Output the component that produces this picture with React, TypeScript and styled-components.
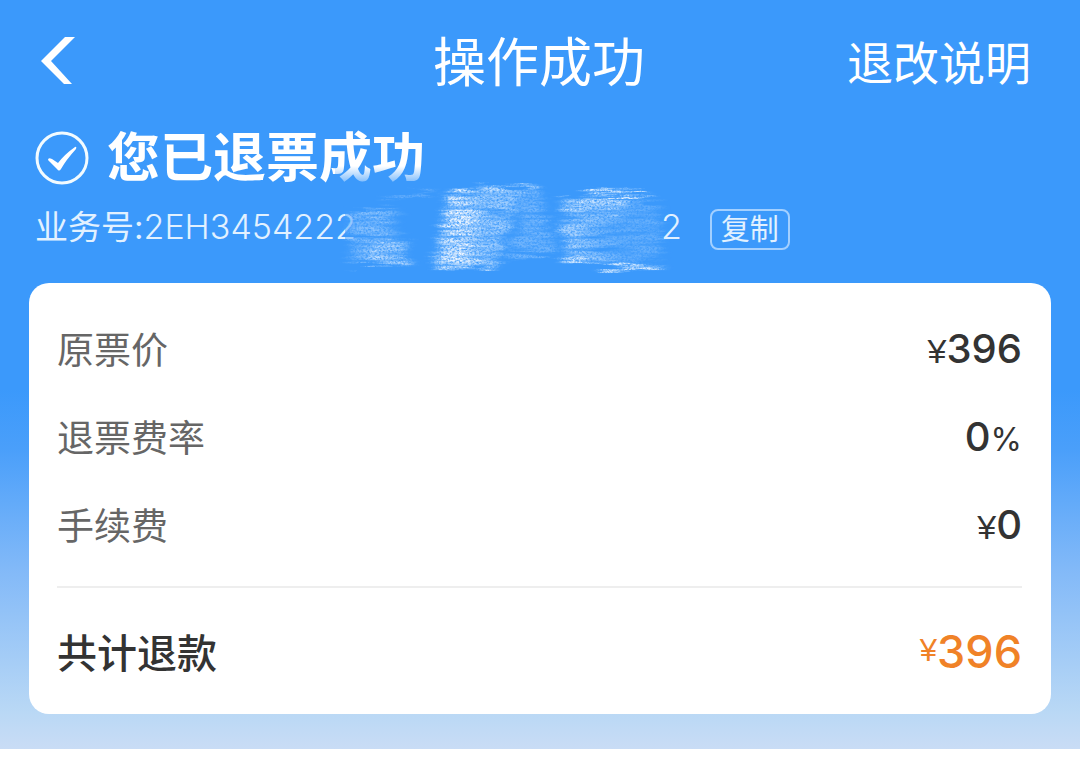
import React from "react";
import styled, { createGlobalStyle } from "styled-components";

const GlobalStyle = createGlobalStyle`
  *, *::before, *::after { box-sizing: border-box; }
  body {
    margin: 0;
    background: #ffffff;
    font-family: Inter, "Noto Sans CJK SC", sans-serif;
    color: #333333;
  }
`;

const Page = styled.main`
  padding: 0 29px 35px;
  background: linear-gradient(
    180deg,
    #3b99fb 0,
    #3b99fb 52%,
    #4a9ffa 60%,
    #82b9f8 76%,
    #b9d8f5 95%,
    #c9dcf5 100%
  );
`;

const NavBar = styled.header`
  display: grid;
  grid-template-columns: 1fr auto 1fr;
  align-items: center;
  height: 124px;
  padding: 2px 14px 0 12px;
  color: #ffffff;
`;

const BackButton = styled.button`
  justify-self: start;
  display: flex;
  padding: 0;
  border: 0;
  background: none;
  color: inherit;
  cursor: pointer;
`;

const Title = styled.h1`
  margin: 0;
  font-size: 53px;
  font-weight: 400;
  line-height: 72px;
`;

const RulesLink = styled.a`
  justify-self: end;
  padding-right: 6px;
  font-size: 46px;
  line-height: 72px;
  color: inherit;
  text-decoration: none;
`;

const Status = styled.section`
  position: relative;
  padding: 0 6px;
  color: #ffffff;
`;

const StatusLine = styled.div`
  display: flex;
  align-items: center;
  gap: 18px;
  height: 68px;
`;

const StatusText = styled.h2`
  margin: 0;
  font-size: 53px;
  font-weight: 700;
  line-height: 68px;
`;

const OrderLine = styled.div`
  display: flex;
  align-items: flex-start;
  margin-bottom: 33px;
  padding-top: 17px;
  color: #e2f1ff;
`;

const OrderNumber = styled.p`
  display: flex;
  margin: 0;
  font-size: 33px;
  line-height: 36px;
`;

const Digits = styled.span`
  font-size: 34px;
  font-weight: 300;
`;

const HiddenDigits = styled.span`
  width: 305px;
`;

const Smudge = styled.svg`
  position: absolute;
  left: 306px;
  top: 40px;
  pointer-events: none;
`;

const CopyButton = styled.button`
  height: 41px;
  margin-left: 28px;
  padding: 0 9px;
  border: 2px solid #a3d0ff;
  border-radius: 8px;
  background: none;
  color: #e2f1ff;
  font-family: inherit;
  font-size: 29px;
  line-height: 37px;
  cursor: pointer;
`;

const Card = styled.dl`
  margin: 0;
  padding: 21px 29px 0 28px;
  border-radius: 20px;
  background: #ffffff;
`;

const Row = styled.div`
  display: flex;
  align-items: center;
  justify-content: space-between;
  height: 88px;
`;

const TotalRow = styled(Row)`
  height: 128px;
  margin-top: 18px;
  border-top: 2px solid #eeeeee;
`;

const Label = styled.dt<{ $strong?: boolean }>`
  font-size: ${(p) => (p.$strong ? 40 : 37)}px;
  font-weight: ${(p) => (p.$strong ? 500 : 400)};
  color: ${(p) => (p.$strong ? "#333333" : "#666666")};
`;

const Value = styled.dd<{ $total?: boolean }>`
  display: flex;
  align-items: ${(p) => (p.$total ? "center" : "baseline")};
  margin: 0;
  font-size: ${(p) => (p.$total ? 45 : 40)}px;
  font-weight: 500;
  color: ${(p) => (p.$total ? "#f08227" : "#333333")};
`;

const Unit = styled.span<{ $small?: boolean }>`
  font-family: "Liberation Sans", Arial, sans-serif;
  font-size: ${(p) => (p.$small ? 31 : 34)}px;
  font-weight: 400;
`;

const Percent = styled.span`
  font-size: 32px;
  font-weight: 400;
`;

const fees = [
  { label: "原票价", prefix: "¥", value: "396", suffix: "" },
  { label: "退票费率", prefix: "", value: "0", suffix: "%" },
  { label: "手续费", prefix: "¥", value: "0", suffix: "" },
];

const BackIcon = () => (
  <svg width="36" height="52" viewBox="0 0 36 52" aria-hidden="true">
    <path d="M24 0H34L10 24L31 47H23L0 24Z" fill="currentColor" />
  </svg>
);

const CheckIcon = () => (
  <svg width="54" height="54" viewBox="0 0 54 54" aria-hidden="true">
    <circle cx="27" cy="27" r="25" fill="none" stroke="#f2fbff" strokeWidth="3" />
    <path
      d="M13 29Q13 26 17 28L23 32Q30 23 40 16Q42 15 41 18Q31 29 26 38Q24 41 22 38Z"
      fill="#ffffff"
    />
  </svg>
);

const BrushMarks = () => (
  <Smudge width="350" height="112" viewBox="0 0 350 112" aria-hidden="true">
    <defs>
      <filter id="chalk" x="-10%" y="-10%" width="120%" height="120%">
        <feTurbulence type="fractalNoise" baseFrequency="0.02 0.25" numOctaves="3" seed="4" result="streak" />
        <feGaussianBlur in="SourceGraphic" stdDeviation="4 1" result="soft" />
        <feDisplacementMap in="soft" in2="streak" scale="20" xChannelSelector="R" yChannelSelector="A" result="rough" />
        <feColorMatrix in="streak" type="matrix" values="0 0 0 0 1  0 0 0 0 1  0 0 0 0 1  0 2.4 0 0 -0.4" result="bands" />
        <feComposite in="rough" in2="bands" operator="in" result="banded" />
        <feTurbulence type="fractalNoise" baseFrequency="0.45 0.55" numOctaves="3" seed="8" result="grain" />
        <feColorMatrix in="grain" type="matrix" values="0 0 0 0 1  0 0 0 0 1  0 0 0 0 1  2 0 0 0 -0.3" result="speck" />
        <feComposite in="banded" in2="speck" operator="in" result="chalked" />
        <feGaussianBlur in="chalked" stdDeviation="0.5" />
      </filter>
      <linearGradient id="strokeA">
        <stop offset="0" stopColor="#b7d9ff" stopOpacity=".5" />
        <stop offset=".6" stopColor="#c6e1ff" stopOpacity=".6" />
        <stop offset="1" stopColor="#b7d9ff" stopOpacity=".1" />
      </linearGradient>
      <linearGradient id="strokeB">
        <stop offset="0" stopColor="#e4f1ff" stopOpacity=".8" />
        <stop offset=".4" stopColor="#f2f8ff" stopOpacity="1" />
        <stop offset="1" stopColor="#d6eaff" stopOpacity=".7" />
      </linearGradient>
      <linearGradient id="strokeC">
        <stop offset="0" stopColor="#d6eaff" stopOpacity=".85" />
        <stop offset=".35" stopColor="#bcdcff" stopOpacity=".6" />
        <stop offset=".6" stopColor="#b4d8ff" stopOpacity=".35" />
        <stop offset="1" stopColor="#b4d8ff" stopOpacity=".35" />
      </linearGradient>
      <linearGradient id="fade" x1="0" y1="0" x2="0" y2="1">
        <stop offset="0" stopColor="#3b99fb" stopOpacity="0" />
        <stop offset="1" stopColor="#3b99fb" stopOpacity=".8" />
      </linearGradient>
    </defs>
    <rect x="0" y="2" width="86" height="20" fill="url(#fade)" />
    <rect x="10" y="48" width="38" height="44" fill="#3b99fb" fillOpacity=".5" />
    <g filter="url(#chalk)">
      <path d="M16 45H64V94H16Z" fill="url(#strokeA)" />
      <path d="M48 34L98 26V28L48 37Z" fill="#9ccaff" fillOpacity=".6" />
      <path d="M36 76H72V98H30Z" fill="#d6eaff" fillOpacity=".6" />
      <path d="M14 96H76V101H14Z" fill="#cfe6ff" fillOpacity=".8" />
      <path d="M114 27H148L146 100H100L108 60Z" fill="url(#strokeB)" />
      <path d="M112 34H142L136 94H112Z" fill="#f2f8ff" fillOpacity=".8" />
      <path d="M146 26H186L164 98H142Z" fill="#c6e1ff" fillOpacity=".7" />
      <path d="M146 21H204V27H146ZM100 98H162V104H100Z" fill="#d6eaff" fillOpacity=".9" />
      <path d="M186 28H206L222 92H170L186 68Z" fill="#b4d8ff" fillOpacity=".45" />
      <path d="M228 38L290 34L324 40V98H234L226 64Z" fill="url(#strokeC)" />
      <path d="M252 26H314V31H252Z" fill="#eef6ff" />
      <path d="M228 34H290V46H228Z" fill="#d6eaff" fillOpacity=".7" />
      <path d="M230 95H266V99H230ZM266 100H328V105H266Z" fill="#d6eaff" />
    </g>
  </Smudge>
);

export default function App() {
  return (
    <>
      <GlobalStyle />
      <Page>
        <NavBar>
          <BackButton type="button" aria-label="返回">
            <BackIcon />
          </BackButton>
          <Title>操作成功</Title>
          <RulesLink href="#rules">退改说明</RulesLink>
        </NavBar>
        <Status>
          <StatusLine>
            <CheckIcon />
            <StatusText>您已退票成功</StatusText>
          </StatusLine>
          <OrderLine>
            <OrderNumber>
              <span>业务号:</span>
              <Digits>2EH3454222</Digits>
              <HiddenDigits />
              <Digits>2</Digits>
            </OrderNumber>
            <CopyButton type="button">复制</CopyButton>
          </OrderLine>
          <BrushMarks />
        </Status>
        <Card>
          {fees.map((fee) => (
            <Row key={fee.label}>
              <Label>{fee.label}</Label>
              <Value>
                {fee.prefix && <Unit>{fee.prefix}</Unit>}
                {fee.value}
                {fee.suffix && <Percent>{fee.suffix}</Percent>}
              </Value>
            </Row>
          ))}
          <TotalRow>
            <Label $strong>共计退款</Label>
            <Value $total>
              <Unit $small>¥</Unit>396
            </Value>
          </TotalRow>
        </Card>
      </Page>
    </>
  );
}
